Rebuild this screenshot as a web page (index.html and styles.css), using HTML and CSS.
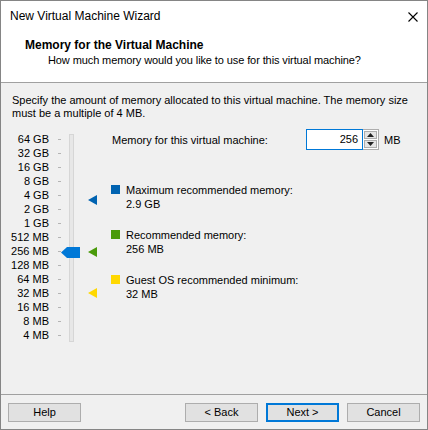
FILE: index.html
```html
<!DOCTYPE html>
<html>
<head>
<meta charset="utf-8">
<link rel="stylesheet" href="styles.css">
</head>
<body>
<div class="window">
  <div class="titlebar">
    <span class="title">New Virtual Machine Wizard</span>
    <svg class="close" width="10" height="10" viewBox="0 0 10 10"><path d="M0.5 0.5 L9.5 9.5 M9.5 0.5 L0.5 9.5" stroke="#000" stroke-width="1.1" fill="none"/></svg>
  </div>
  <div class="header">
    <div class="h-title">Memory for the Virtual Machine</div>
    <div class="h-sub">How much memory would you like to use for this virtual machine?</div>
  </div>
  <div class="content">
    <p class="desc">Specify the amount of memory allocated to this virtual machine. The memory size must be a multiple of 4 MB.</p>
    <div class="main">
      <div class="scale">
        <div class="row"><span>64 GB</span><i class="tick"></i></div>
        <div class="row"><span>32 GB</span><i class="tick"></i></div>
        <div class="row"><span>16 GB</span><i class="tick"></i></div>
        <div class="row"><span>8 GB</span><i class="tick"></i></div>
        <div class="row"><span>4 GB</span><i class="tick"></i></div>
        <div class="row"><span>2 GB</span><i class="tick"></i></div>
        <div class="row"><span>1 GB</span><i class="tick"></i></div>
        <div class="row"><span>512 MB</span><i class="tick"></i></div>
        <div class="row"><span>256 MB</span><i class="tick"></i></div>
        <div class="row"><span>128 MB</span><i class="tick"></i></div>
        <div class="row"><span>64 MB</span><i class="tick"></i></div>
        <div class="row"><span>32 MB</span><i class="tick"></i></div>
        <div class="row"><span>16 MB</span><i class="tick"></i></div>
        <div class="row"><span>8 MB</span><i class="tick"></i></div>
        <div class="row"><span>4 MB</span><i class="tick"></i></div>
      </div>
      <div class="slider">
        <div class="track"></div>
        <div class="thumb" style="top:118px"></div>
        <div class="marker blue" style="top:66px"></div>
        <div class="marker green" style="top:118px"></div>
        <div class="marker yellow" style="top:159px"></div>
      </div>
      <div class="details">
        <div class="mem-row">
          <span class="mem-label">Memory for this virtual machine:</span>
          <div class="spin">
            <div class="spin-input">256</div>
            <div class="spin-btns">
              <div class="spin-btn"><svg width="7" height="4" viewBox="0 0 7 4"><path d="M0 4 L3.5 0 L7 4 Z" fill="#222"/></svg></div>
              <div class="spin-btn"><svg width="7" height="4" viewBox="0 0 7 4"><path d="M0 0 L3.5 4 L7 0 Z" fill="#222"/></svg></div>
            </div>
          </div>
          <span class="unit">MB</span>
        </div>
        <div class="legend">
          <div class="item"><i class="sq blue"></i><div>Maximum recommended memory:<br>2.9 GB</div></div>
          <div class="item"><i class="sq green"></i><div>Recommended memory:<br>256 MB</div></div>
          <div class="item"><i class="sq yellow"></i><div>Guest OS recommended minimum:<br>32 MB</div></div>
        </div>
      </div>
    </div>
  </div>
  <div class="footer">
    <button class="btn">Help</button>
    <div class="spacer"></div>
    <button class="btn">&lt; Back</button>
    <button class="btn default">Next &gt;</button>
    <button class="btn">Cancel</button>
  </div>
</div>
</body>
</html>
```

FILE: styles.css
```css
* { box-sizing: border-box; }
html, body { margin: 0; padding: 0; }
body {
  font-family: "Liberation Sans", Arial, sans-serif;
  font-size: 11px;
  color: #000;
  background: #fff;
}
.window {
  width: 428px;
  height: 430px;
  border: 1px solid #858585;
  background: #f0f0f0;
  display: flex;
  flex-direction: column;
}
.titlebar {
  height: 29px;
  flex: none;
  background: #fff;
  display: flex;
  align-items: center;
  padding: 0 9px 0 9px;
  font-size: 12px;
}
.title { flex: 1; line-height: 14px; padding-top: 1px; }
.close { display: block; margin-top: 2px; }
.header {
  flex: none;
  height: 53px;
  background: #fff;
  border-bottom: 1px solid #a0a0a0;
  padding: 9px 0 0 24px;
  line-height: 13px;
}
.h-title { font-weight: bold; font-size: 12px; }
.h-sub { margin-top: 2px; padding-left: 23px; letter-spacing: -0.1px; }
.content {
  flex: 1;
  padding: 11px 0 0 11px;
}
.desc {
  margin: 0;
  line-height: 13px;
  width: 412px;
}
.main {
  display: flex;
  margin-top: 9px;
  margin-left: -11px;
}
.scale {
  width: 60px;
  padding-top: 3px;
}
.row {
  height: 14px;
  line-height: 14px;
  display: flex;
  align-items: center;
  justify-content: flex-end;
  gap: 9px;
}
.tick {
  display: block;
  width: 3px;
  height: 1px;
  background: #b4b4b4;
}
.slider {
  position: relative;
  width: 50px;
  padding-top: 5px;
}
.track {
  margin-left: 8px;
  width: 5px;
  height: 208px;
  background: #e7e7e7;
  border: 1px solid #d6d6d6;
}
.thumb {
  position: absolute;
  left: 0;
  width: 19px;
  height: 11px;
  background: #0078d7;
  clip-path: polygon(0 50%, 6px 0, 100% 0, 100% 100%, 6px 100%);
}
.marker {
  position: absolute;
  left: 27px;
  width: 9px;
  height: 10px;
  clip-path: polygon(0 50%, 100% 0, 100% 100%);
}
.blue { background: #0063b1; }
.green { background: #4a9a0a; }
.yellow { background: #ffd800; }
.details {
  flex: 1;
}
.mem-row {
  display: flex;
  align-items: center;
  height: 21px;
}
.mem-label {
  width: 195px;
  padding-left: 1px;
}
.spin {
  display: flex;
  height: 21px;
}
.spin-input {
  width: 57px;
  height: 21px;
  border: 1px solid #0078d7;
  background: #fff;
  text-align: right;
  padding-right: 4px;
  line-height: 19px;
}
.spin-btns {
  width: 16px;
  display: flex;
  flex-direction: column;
  background: #fff;
  border: 1px solid #adadad;
  border-left: none;
  padding: 1px;
  gap: 1px;
}
.spin-btn {
  flex: 1;
  background: #e5e5e5;
  border: 1px solid #adadad;
  display: flex;
  align-items: center;
  justify-content: center;
}
.spin-btn svg { display: block; }
.unit { margin-left: 5px; }
.legend {
  margin-top: 33px;
  display: flex;
  flex-direction: column;
  gap: 17px;
}
.item {
  display: flex;
  gap: 6px;
  line-height: 14px;
}
.sq {
  display: block;
  width: 9px;
  height: 9px;
  margin-top: 2px;
  flex: none;
}
.footer {
  flex: none;
  border-top: 1px solid #a0a0a0;
  padding: 8px 7px 7px 7px;
  display: flex;
  gap: 8px;
}
.spacer { flex: 1; }
.btn {
  width: 73px;
  height: 19px;
  background: #e1e1e1;
  border: 1px solid #adadad;
  font-family: "Liberation Sans", Arial, sans-serif;
  font-size: 11px;
  color: #000;
  padding: 0;
  margin: 0;
  line-height: 17px;
}
.btn.default {
  border: 2px solid #0078d7;
  line-height: 15px;
}
```
